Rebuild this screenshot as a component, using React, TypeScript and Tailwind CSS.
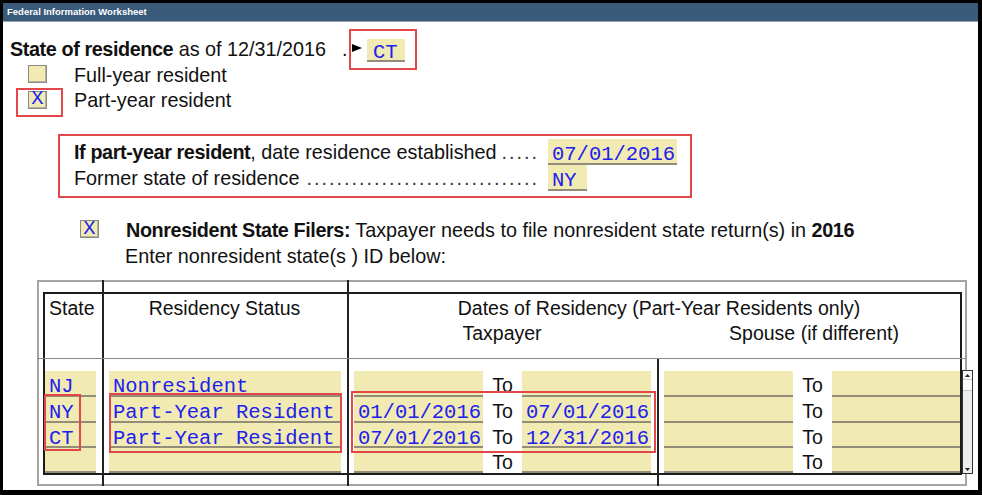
import React from "react";

const FIELD = "bg-[#f1eab2] border-b-2 border-[#918d78]";
const MONO = "font-['Liberation_Mono','Courier_New',monospace] text-[20.5px] text-[#2020ee]";

function Check({ checked, className = "" }: { checked?: boolean; className?: string }) {
  return (
    <div
      className={`w-[19px] h-[18px] shrink-0 bg-[#f1eab2] border border-[#8a8a8a] shadow-[inset_-1px_-1px_0_#b9b39b] flex items-center justify-center ${className}`}
    >
      {checked && <span className={`${MONO} text-[18px] leading-none`}>X</span>}
    </div>
  );
}

function Field({ w, children, pt = "pt-[6px]" }: { w: string; children?: React.ReactNode; pt?: string }) {
  return (
    <div className={`${w} h-full shrink-0 ${FIELD} ${MONO} ${pt} pl-[4px] leading-[20px] whitespace-nowrap overflow-hidden`}>
      {children}
    </div>
  );
}

function To() {
  return <div className="w-[39px] shrink-0 text-center pt-[4px] leading-[20px]">To</div>;
}

const rows = [
  { h: "h-[26px]", state: "NJ", status: "Nonresident", from: "", to: "" },
  { h: "h-[26px]", state: "NY", status: "Part-Year Resident", from: "01/01/2016", to: "07/01/2016" },
  { h: "h-[25px]", state: "CT", status: "Part-Year Resident", from: "07/01/2016", to: "12/31/2016" },
  { h: "h-[25px]", state: "", status: "", from: "", to: "" },
];

function Dots() {
  return (
    <span className="flex-1 min-w-0 flex justify-end overflow-hidden pr-[9px] ml-[6px] text-[#333]">
      <span className="whitespace-nowrap tracking-[2px]">
        {"....................................................................."}
      </span>
    </span>
  );
}

export default function App() {
  return (
    <div className="w-[982px] h-[495px] bg-white border-black border-t-[3px] border-l-[3px] border-r-[4px] border-b-[5px] flex flex-col overflow-hidden font-['Liberation_Sans',Arial,sans-serif] text-[#111]">
      {/* Title bar */}
      <div className="h-[19px] shrink-0 bg-[#3a5a7a] border-b border-[#93a0ad] pl-[4px] flex items-center text-white text-[9.5px] font-bold leading-none">
        Federal Information Worksheet
      </div>

      <div className="pl-[7px] pt-[15px] text-[19.8px] leading-none">
        {/* State of residence */}
        <div className="h-[26px] flex items-center">
          <div className="w-[332px] whitespace-nowrap">
            <span className="font-bold tracking-[-0.4px]">State of residence</span> as of 12/31/2016
          </div>
          <span className="w-[10px]">.</span>
          <div className="relative flex items-center">
            <svg width="10" height="8" viewBox="0 0 10 8" className="self-start mt-[5px]">
              <polygon points="0,0 10,4 0,8" fill="#000" />
            </svg>
            <div className={`ml-[5px] w-[38px] h-[23px] ${FIELD} ${MONO} pl-[6px] pt-[4px] leading-[20px]`}>CT</div>
            <span className="absolute -left-[3px] -top-[10px] -right-[12px] -bottom-[8px] border-2 border-[#e2474b]" />
          </div>
        </div>

        {/* Full-year */}
        <div className="h-[25px] flex items-center">
          <Check className="ml-[18px] -mt-[3px]" />
          <span className="ml-[27px]">Full-year resident</span>
        </div>

        {/* Part-year */}
        <div className="h-[26px] flex items-center">
          <div className="relative ml-[18px] -mt-[3px]">
            <Check checked />
            <span className="absolute -left-[12px] -top-[3px] -right-[16px] -bottom-[8px] border-2 border-[#e2474b]" />
          </div>
          <span className="ml-[27px]">Part-year resident</span>
        </div>

        {/* If part-year resident */}
        <div className="mt-[20px] ml-[48px] w-[634px] h-[64px] border-2 border-[#e2474b] pt-[3px] pl-[14px]">
          <div className="h-[26px] flex">
            <div className="w-[474px] flex items-center pt-[2px]">
              <span className="whitespace-nowrap">
                <span className="font-bold tracking-[-0.4px]">If part-year resident</span>, date residence established
              </span>
              <Dots />
            </div>
            <Field w="w-[129px]">07/01/2016</Field>
          </div>
          <div className="h-[26px] flex">
            <div className="w-[474px] flex items-center pt-[2px]">
              <span className="whitespace-nowrap">Former state of residence</span>
              <Dots />
            </div>
            <Field w="w-[39px]">NY</Field>
          </div>
        </div>

        {/* Nonresident filers */}
        <div className="mt-[20px]">
          <div className="h-[26px] flex items-center">
            <Check checked className="ml-[70px] w-[18px] -mt-[4px]" />
            <span className="ml-[27px] whitespace-nowrap">
              <span className="font-bold tracking-[-0.4px]">Nonresident State Filers:</span> Taxpayer needs to file nonresident state return(s) in{" "}
              <span className="font-bold tracking-[-0.4px]">2016</span>
            </span>
          </div>
          <div className="h-[25px] flex items-center pl-[115px]">Enter nonresident state(s ) ID below:</div>
        </div>

        {/* Table */}
        <div className="relative mt-[11px] ml-[27px] w-[930px] h-[206px] border-2 border-[#a3a3a3] pt-[10px] pl-[4px] text-[19.5px]">
          <div className="w-[919px] h-[183px] border-2 border-[#1c1c1c] flex flex-col">
            {/* header */}
            <div className="h-[64px] shrink-0 flex pt-[2px] leading-[25px]">
              <div className="w-[57px] pl-[4px]">State</div>
              <div className="w-[245px] text-center">Residency Status</div>
              <div className="flex-1">
                <div className="text-center pl-[11px]">Dates of Residency (Part-Year Residents only)</div>
                <div className="flex">
                  <div className="w-[310px] text-center">Taxpayer</div>
                  <div className="flex-1 text-center pl-[11px]">Spouse (if different)</div>
                </div>
              </div>
            </div>
            {/* data rows */}
            <div className="flex-1 pt-[13px] flex flex-col">
              {rows.map((r, i) => (
                <div key={i} className={`${r.h} flex`}>
                  <Field w="w-[51px]">{r.state}</Field>
                  <div className="w-[13px] shrink-0" />
                  <Field w="w-[232px]">{r.status}</Field>
                  <div className="w-[13px] shrink-0" />
                  <Field w="w-[129px]">{r.from}</Field>
                  <To />
                  <Field w="w-[129px]">{r.to}</Field>
                  <div className="w-[13px] shrink-0" />
                  <Field w="w-[129px]" />
                  <To />
                  <Field w="w-[128px]" />
                </div>
              ))}
            </div>
          </div>

          {/* column rules */}
          <span className="absolute left-[63px] -top-[2px] -bottom-[2px] w-[1.5px] bg-[#222]" />
          <span className="absolute left-[308px] -top-[2px] -bottom-[2px] w-[1.5px] bg-[#222]" />
          <span className="absolute left-[618px] top-[76px] -bottom-[2px] w-[1.5px] bg-[#222]" />
          <span className="absolute -left-[2px] -right-[2px] top-[76px] h-px bg-[#8a8a8a]" />

          {/* scrollbar */}
          <div className="absolute left-[923px] top-[88px] w-[11px] h-[104px] bg-[#ececec] border border-[#333] flex flex-col">
            <div className="h-[9px] flex items-center justify-center bg-[#f6f6f6] border-b border-[#cfcfcf]">
              <svg width="5" height="3" viewBox="0 0 5 3">
                <polygon points="0,3 2.5,0 5,3" fill="#222" />
              </svg>
            </div>
            <div className="h-[11px] bg-[#fbfbfb] border-b border-[#c8c8c8]" />
            <div className="flex-1" />
            <div className="h-[8px] flex items-center justify-center">
              <svg width="5" height="3" viewBox="0 0 5 3">
                <polygon points="0,0 2.5,3 5,0" fill="#222" />
              </svg>
            </div>
          </div>

          {/* annotations */}
          <span className="absolute left-[5px] top-[112px] w-[37px] h-[57px] border-2 border-[#e2474b]" />
          <span className="absolute left-[70px] top-[111px] w-[233px] h-[60px] border-2 border-[#e2474b]" />
          <span className="absolute left-[312px] top-[109px] w-[305px] h-[62px] border-2 border-[#e2474b]" />
        </div>
      </div>
    </div>
  );
}
